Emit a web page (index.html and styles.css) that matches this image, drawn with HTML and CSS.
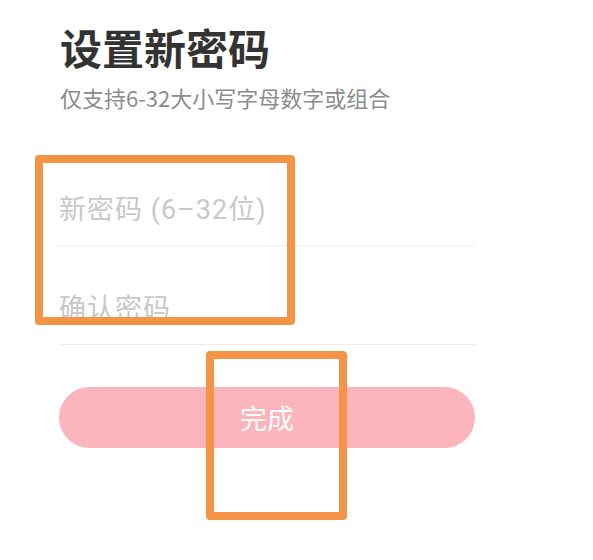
FILE: index.html
```html
<!DOCTYPE html>
<html lang="zh-CN">
<head>
<meta charset="utf-8">
<title>设置新密码</title>
<link rel="stylesheet" href="styles.css">
</head>
<body>
<main class="page">
  <h1 class="title">设置新密码</h1>
  <p class="subtitle">仅支持6-32大小写字母数字或组合</p>
  <form class="form">
    <div class="field"><input class="input" type="password" placeholder="新密码 (6–32位)"></div>
    <div class="field"><input class="input" type="password" placeholder="确认密码"></div>
    <button class="submit" type="button">完成</button>
  </form>
  <div class="mark mark-one"></div>
  <div class="mark mark-two"></div>
</main>
</body>
</html>
```
FILE: styles.css
```css
* { box-sizing: border-box; }
html, body { margin: 0; padding: 0; background: #ffffff; }
body {
  width: 593px;
  height: 560px;
  overflow: hidden;
  font-family: "Noto Sans CJK SC", "Noto Sans", sans-serif;
}
.page {
  position: relative;
  padding: 21px 118px 0 59px;
  height: 560px;
}
.title {
  margin: 0 0 0 1px;
  font-size: 42px;
  line-height: 52px;
  font-weight: 700;
  color: #333333;
}
.subtitle {
  margin: 11px 0 0 1px;
  font-size: 22px;
  line-height: 26px;
  color: #8c8c8c;
}
.form {
  margin-top: 36px;
  display: flex;
  flex-direction: column;
}
.field {
  height: 99px;
  border-bottom: 1px solid #ececec;
  display: flex;
  align-items: flex-end;
  padding-bottom: 18px;
}
.field:first-child { height: 100px; }
.input {
  width: 100%;
  border: none;
  outline: none;
  padding: 0;
  background: transparent;
  font-family: "Roboto", "Noto Sans CJK SC", sans-serif;
  font-size: 27px;
  line-height: 34px;
  letter-spacing: 1px;
  color: #333;
}
.input::placeholder { color: #c8c8c8; }
.submit {
  margin-top: 42px;
  height: 61px;
  border: none;
  border-radius: 31px;
  background: #fcb5bd;
  color: #ffffff;
  font-family: "Noto Sans CJK SC", "Noto Sans", sans-serif;
  font-size: 27px;
  padding: 0;
}
.mark {
  position: absolute;
  border: 8px solid #f39447;
  border-radius: 4px;
}
.mark-one { left: 35px; top: 155px; width: 260px; height: 170px; }
.mark-two { left: 206px; top: 351px; width: 141px; height: 169px; }
```
